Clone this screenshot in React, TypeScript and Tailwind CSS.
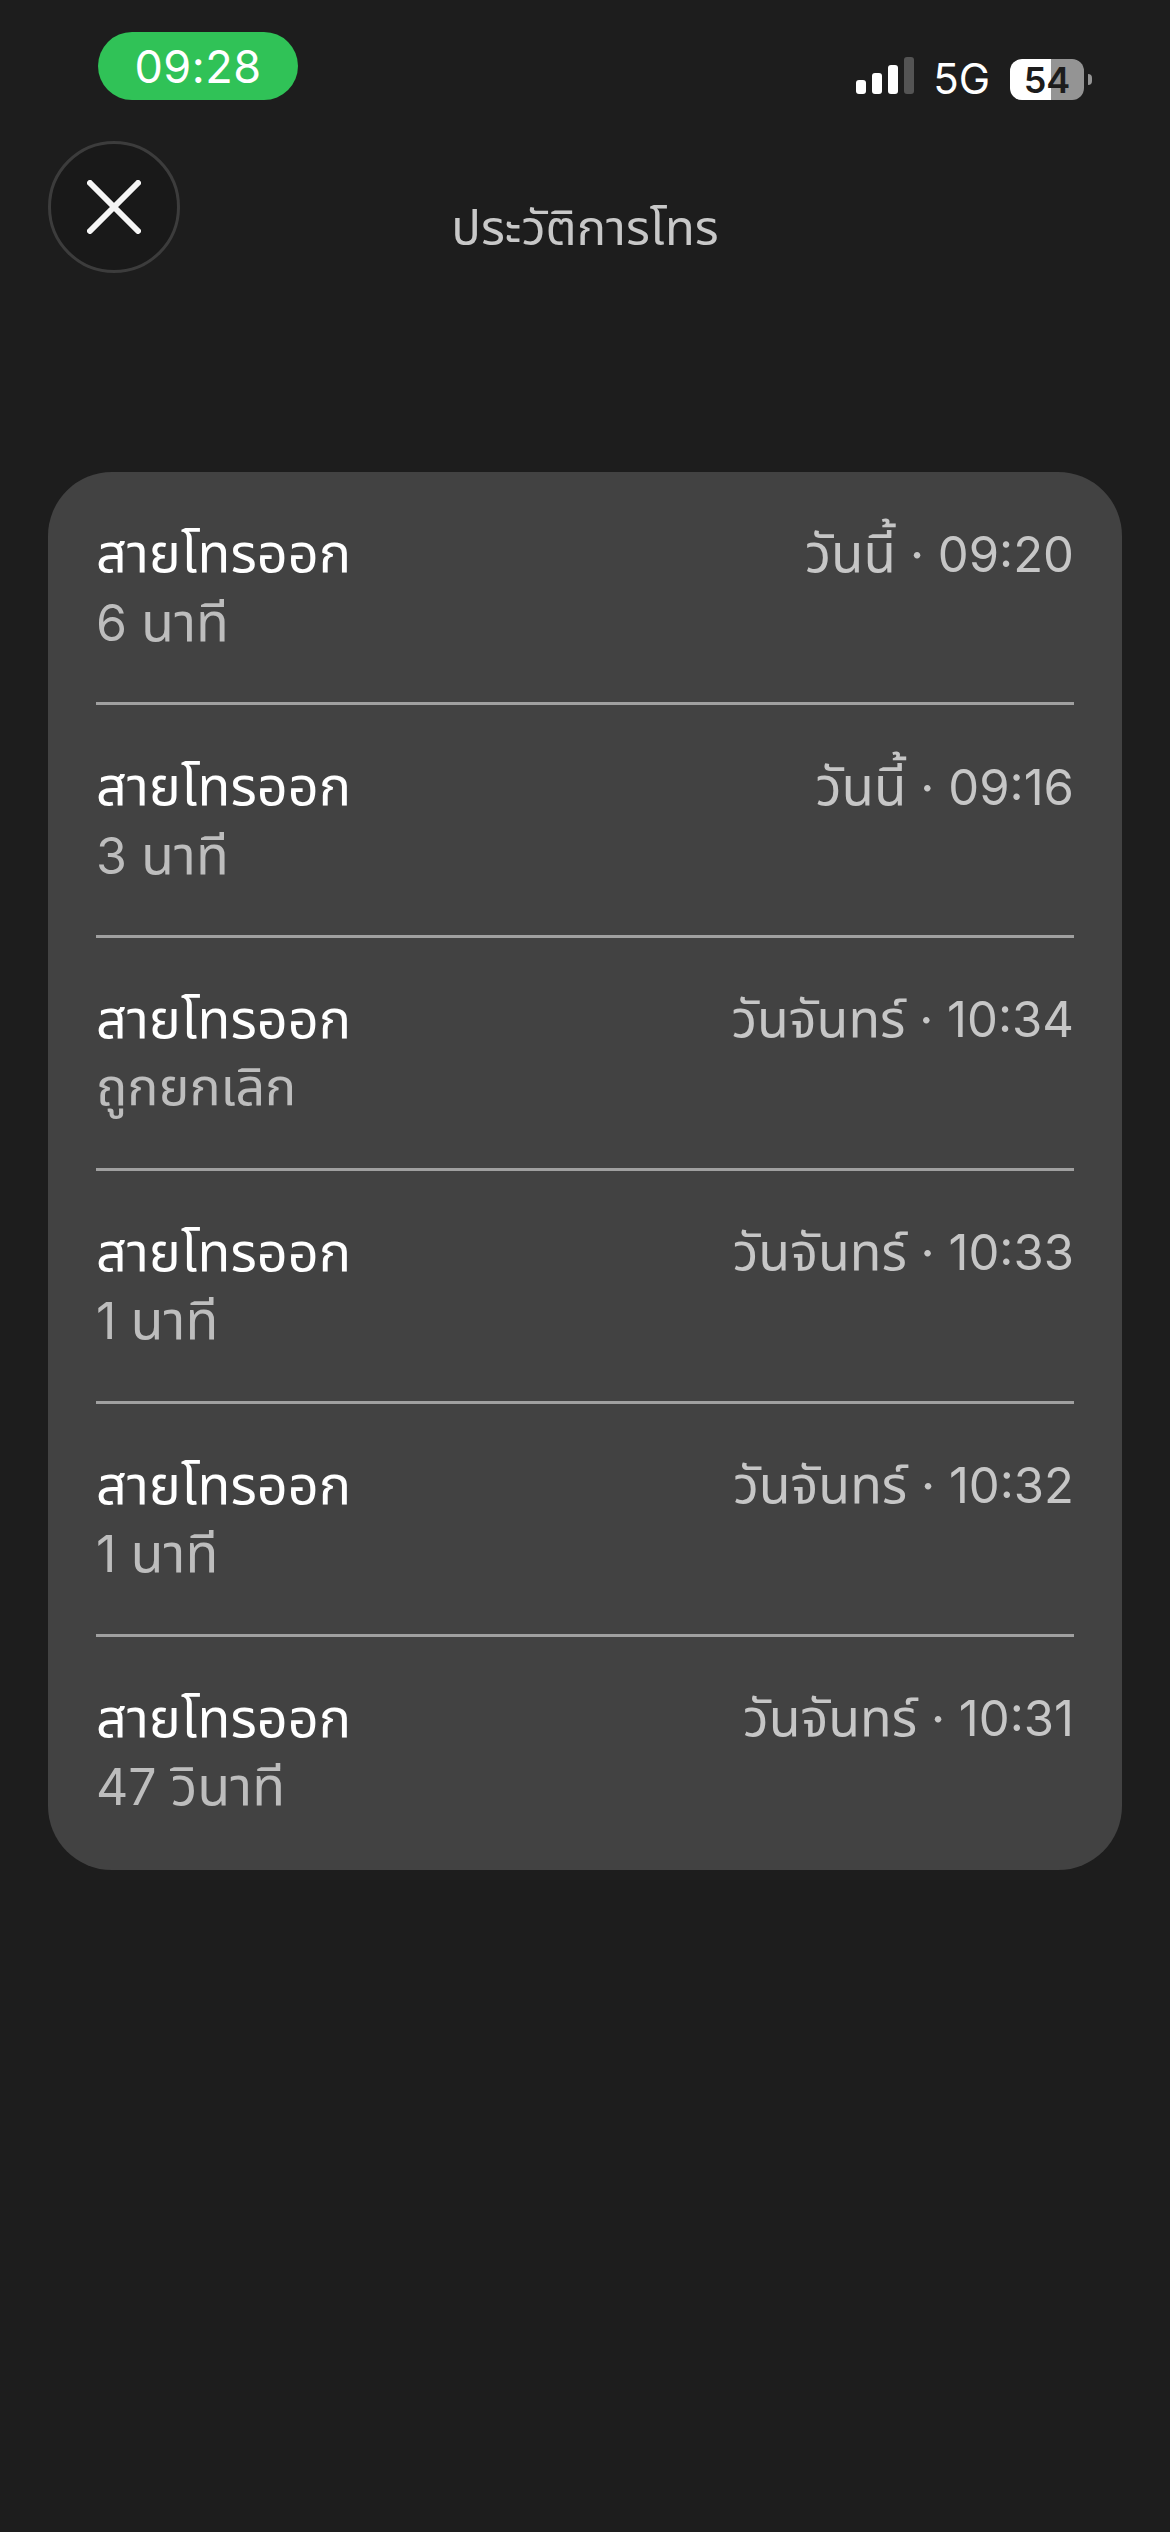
const font = { fontFamily: 'Inter, "Noto Sans Thai", "Noto Sans", "DejaVu Sans", sans-serif' };

const calls = [
  { day: 'วันนี้', daySize: 'text-[53px]', time: '09:20', num: '6', unit: 'นาที', unitSize: 'text-[54px]' },
  { day: 'วันนี้', daySize: 'text-[53px]', time: '09:16', num: '3', unit: 'นาที', unitSize: 'text-[54px]' },
  { day: 'วันจันทร์', daySize: 'text-[52px]', time: '10:34', num: '', unit: 'ถูกยกเลิก', unitSize: 'text-[52px]' },
  { day: 'วันจันทร์', daySize: 'text-[52px]', time: '10:33', num: '1', unit: 'นาที', unitSize: 'text-[54px]' },
  { day: 'วันจันทร์', daySize: 'text-[52px]', time: '10:32', num: '1', unit: 'นาที', unitSize: 'text-[54px]' },
  { day: 'วันจันทร์', daySize: 'text-[52px]', time: '10:31', num: '47', unit: 'วินาที', unitSize: 'text-[54px]' },
];

function StatusBar() {
  return (
    <div className="flex items-start justify-between pt-[32px] pl-[98px] pr-[78px] h-[141px]">
      <div className="w-[200px] h-[68px] rounded-[34px] bg-[#30c257] flex items-center justify-center text-white text-[45px] leading-none tracking-[0.5px]">
        09:28
      </div>
      <div className="flex items-end gap-[20px] h-[66px]">
        <div className="flex items-end gap-[6px] mb-[4px] mr-[-1px]">
          <div className="w-[10px] h-[14px] rounded-[3px] bg-white" />
          <div className="w-[10px] h-[21px] rounded-[3px] bg-white" />
          <div className="w-[10px] h-[29px] rounded-[3px] bg-white" />
          <div className="w-[10px] h-[37px] rounded-[3px] bg-[#545454]" />
        </div>
        <div className="text-white text-[42px] leading-[40px] mb-[-1px]">5G</div>
        <div className="flex items-center gap-[4px] mb-[-2px]">
          <div className="w-[74px] h-[41px] rounded-[12px] overflow-hidden bg-[linear-gradient(to_right,#ffffff_0,#ffffff_41px,#949494_41px)] flex items-center justify-center text-[#1c1c1c] text-[36px] font-semibold leading-none">
            54
          </div>
          <div className="w-[4px] h-[11px] rounded-r-[4px] bg-[#949494]" />
        </div>
      </div>
    </div>
  );
}

function Header() {
  return (
    <div className="h-[132px] mx-[48px] flex items-start">
      <div className="w-[132px] h-[132px] rounded-full bg-[#191919] border-[3px] border-[#3c3c3c] flex items-center justify-center shrink-0">
        <svg width="54" height="54" viewBox="0 0 54 54" fill="none" stroke="#f5f5f5" strokeWidth="6" strokeLinecap="round">
          <path d="M3 3 L51 51 M51 3 L3 51" />
        </svg>
      </div>
      <div className="flex-1 pr-[132px] pt-[58px] text-center text-[#c8c8c8] text-[49px] leading-[58px]">
        ประวัติการโทร
      </div>
    </div>
  );
}

type Call = (typeof calls)[number];

function CallRow({ call, last }: { call: Call; last: boolean }) {
  return (
    <div className="h-[233px] mx-[48px] flex flex-col">
      <div className="flex justify-between items-start pt-[46px]">
        <div className="text-white text-[54px] leading-[70px]">สายโทรออก</div>
        <div className="text-[#c6c6c6] text-[49px] leading-[70px]">
          <span className={call.daySize}>{call.day}</span> · {call.time}
        </div>
      </div>
      <div className="text-[#bdbdbd] text-[50px] leading-[70px] mt-[-3px]">
        {call.num && <span>{call.num} </span>}
        <span className={call.unitSize}>{call.unit}</span>
      </div>
      {!last && <div className="mt-auto h-[3px] bg-[#a0a0a0]" />}
    </div>
  );
}

export default function App() {
  return (
    <div className="min-h-[2532px] w-[1170px] bg-[#1d1d1d] overflow-hidden" style={font}>
      <StatusBar />
      <Header />
      <div className="mt-[199px] mx-[48px] rounded-[64px] bg-[#424242]">
        {calls.map((c, i) => (
          <CallRow key={i} call={c} last={i === calls.length - 1} />
        ))}
      </div>
    </div>
  );
}
